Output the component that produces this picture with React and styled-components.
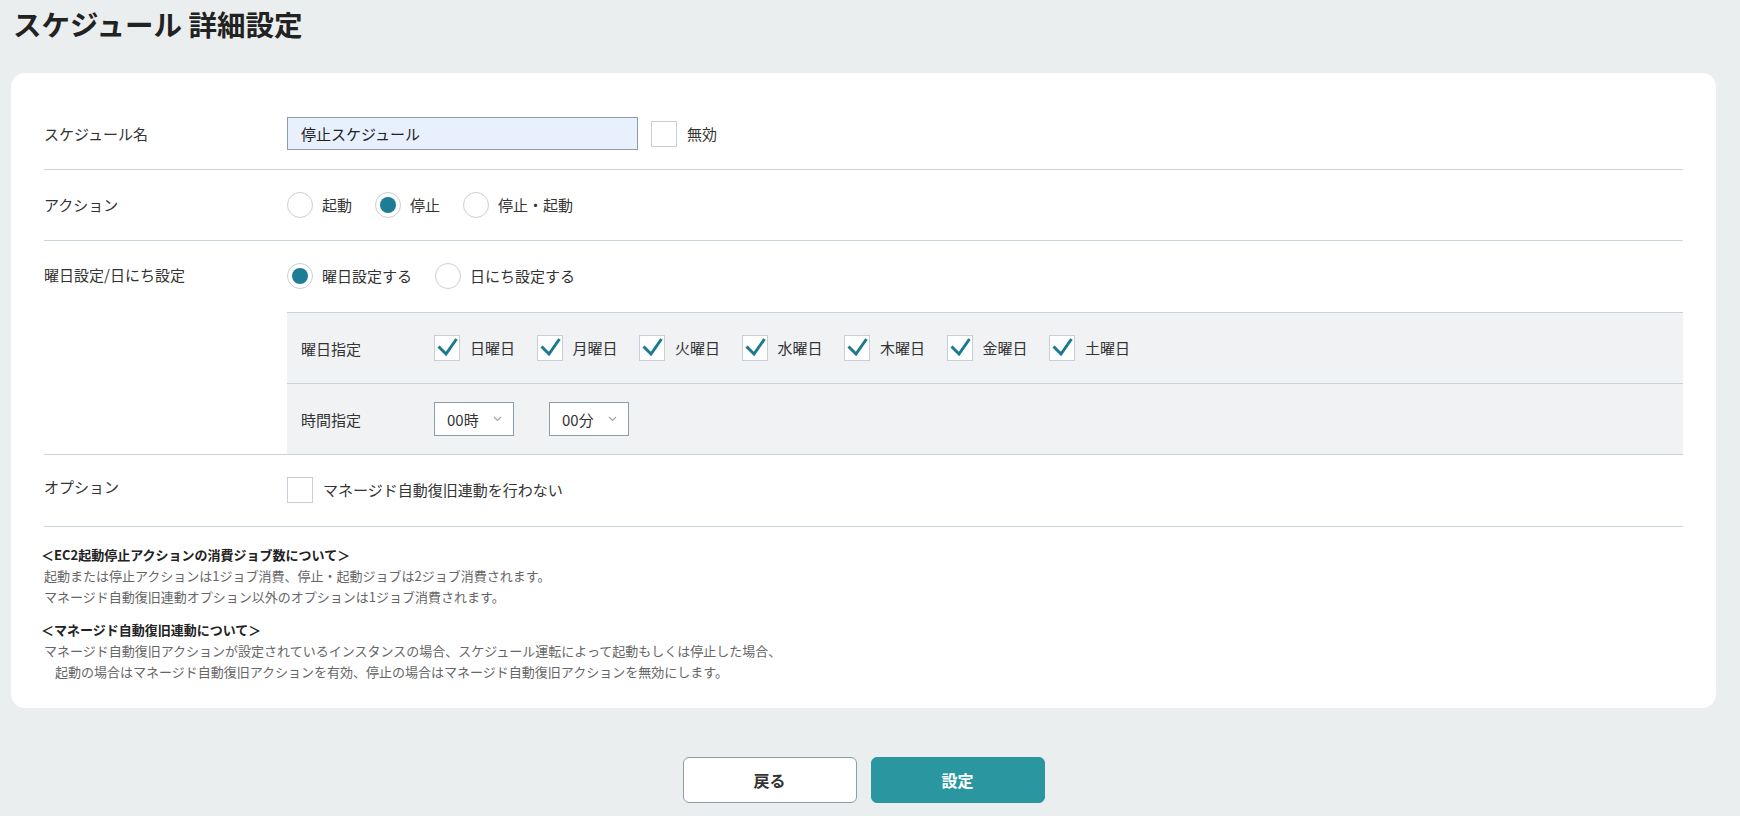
import styled, { createGlobalStyle } from 'styled-components';

const GlobalStyle = createGlobalStyle`
  html, body {
    margin: 0;
    padding: 0;
    background: #eaeeef;
  }
  body {
    font-family: "Noto Sans CJK JP", "Noto Sans", sans-serif;
    color: #333;
  }
`;

const days = ['日曜日', '月曜日', '火曜日', '水曜日', '木曜日', '金曜日', '土曜日'];

const CheckIcon = () => (
  <svg width="24" height="24" viewBox="0 0 24 24">
    <path d="M3.5 10.5 L11 18 L21.5 3" fill="none" stroke="#1b7a90" strokeWidth="3" strokeLinecap="butt" strokeLinejoin="miter" />
  </svg>
);

const Chevron = () => (
  <svg width="9" height="6" viewBox="0 0 9 6">
    <path d="M1 1 L4.5 4.5 L8 1" fill="none" stroke="#9aa5ae" strokeWidth="1.2" />
  </svg>
);

const Radio = ({ checked, label }) => (
  <Option>
    <RadioCircle>{checked && <RadioDot />}</RadioCircle>
    <OptionText>{label}</OptionText>
  </Option>
);

const Check = ({ checked, label, $gap }) => (
  <Option $gap={$gap}>
    <CheckBox>{checked && <CheckIcon />}</CheckBox>
    <OptionText>{label}</OptionText>
  </Option>
);

const App = () => {
  return (
    <Page>
      <GlobalStyle />
      <Title>スケジュール 詳細設定</Title>

      <Card>
        <Row $pad="19px 0" $align="center">
          <Label>スケジュール名</Label>
          <Content>
            <TextInput>停止スケジュール</TextInput>
            <Check label="無効" $gap="10px" />
          </Content>
        </Row>

        <Row $pad="22px 0" $align="center">
          <Label>アクション</Label>
          <Content $gap="23px">
            <Radio label="起動" />
            <Radio checked label="停止" />
            <Radio label="停止・起動" />
          </Content>
        </Row>

        <Row $pad="22px 0 0" $align="flex-start">
          <Label $top="2px">曜日設定/日にち設定</Label>
          <Column>
            <Content $gap="23px">
              <Radio checked label="曜日設定する" />
              <Radio label="日にち設定する" />
            </Content>
            <SubPanel>
              <SubRow>
                <SubLabel>曜日指定</SubLabel>
                <Content $gap="21.5px">
                  {days.map((d) => (
                    <Check key={d} checked label={d} $gap="10px" />
                  ))}
                </Content>
              </SubRow>
              <SubRow>
                <SubLabel>時間指定</SubLabel>
                <Content $gap="35px">
                  <Select>
                    <span>00時</span>
                    <Chevron />
                  </Select>
                  <Select>
                    <span>00分</span>
                    <Chevron />
                  </Select>
                </Content>
              </SubRow>
            </SubPanel>
          </Column>
        </Row>

        <Row $pad="22px 0 23px" $align="flex-start">
          <Label $top="0px">オプション</Label>
          <Check label="マネージド自動復旧連動を行わない" $gap="10px" />
        </Row>

        <Notes>
          <NoteBlock>
            <NoteHead>＜EC2起動停止アクションの消費ジョブ数について＞</NoteHead>
            <NoteLine>起動または停止アクションは1ジョブ消費、停止・起動ジョブは2ジョブ消費されます。</NoteLine>
            <NoteLine>マネージド自動復旧連動オプション以外のオプションは1ジョブ消費されます。</NoteLine>
          </NoteBlock>
          <NoteBlock>
            <NoteHead>＜マネージド自動復旧連動について＞</NoteHead>
            <NoteLine>マネージド自動復旧アクションが設定されているインスタンスの場合、スケジュール運転によって起動もしくは停止した場合、</NoteLine>
            <NoteLine $indent>起動の場合はマネージド自動復旧アクションを有効、停止の場合はマネージド自動復旧アクションを無効にします。</NoteLine>
          </NoteBlock>
        </Notes>
      </Card>

      <Buttons>
        <Button>戻る</Button>
        <Button $primary>設定</Button>
      </Buttons>
    </Page>
  );
};

const Page = styled.div`
  padding: 0 24px 40px 11px;
`;

const Title = styled.h1`
  margin: 0;
  padding: 9px 0 0 2px;
  font-size: 28.5px;
  line-height: 30px;
  font-weight: 700;
  color: #222;
`;

const Card = styled.div`
  margin-top: 34px;
  background: #fff;
  border-radius: 14px;
  padding: 25px 33px 26px;
`;

const Row = styled.div`
  display: flex;
  align-items: ${({ $align }) => $align};
  padding: ${({ $pad }) => $pad};
  border-bottom: 1px solid #c9d3dc;
`;

const Label = styled.div`
  width: 243px;
  flex-shrink: 0;
  font-size: 15px;
  line-height: 20px;
  padding-top: ${({ $top }) => $top || '0'};
  color: #333;
`;

const Column = styled.div`
  flex: 1;
  display: flex;
  flex-direction: column;
  gap: 23px;
`;

const Content = styled.div`
  display: flex;
  align-items: center;
  gap: ${({ $gap }) => $gap || '13px'};
`;

const TextInput = styled.div`
  box-sizing: border-box;
  width: 351px;
  height: 33px;
  padding: 0 13px;
  display: flex;
  align-items: center;
  background: #e8f0fe;
  border: 1px solid #8d9cab;
  font-size: 15px;
  color: #222;
`;

const Option = styled.label`
  display: flex;
  align-items: center;
  gap: ${({ $gap }) => $gap || '9px'};
`;

const OptionText = styled.span`
  font-size: 15px;
  line-height: 20px;
  color: #333;
`;

const RadioCircle = styled.span`
  box-sizing: border-box;
  width: 26px;
  height: 26px;
  border-radius: 50%;
  border: 1px solid #c6cfd8;
  background: #fff;
  display: flex;
  align-items: center;
  justify-content: center;
`;

const RadioDot = styled.span`
  width: 16px;
  height: 16px;
  border-radius: 50%;
  background: #1d7d94;
`;

const CheckBox = styled.span`
  box-sizing: border-box;
  width: 26px;
  height: 26px;
  border: 1px solid #c6cfd8;
  background: #fff;
  display: flex;
  align-items: center;
  justify-content: center;
`;

const SubPanel = styled.div`
  background: #f0f2f3;
  border-top: 1px solid #c9d3dc;
`;

const SubRow = styled.div`
  display: flex;
  align-items: center;
  height: 70px;
  padding-left: 14px;

  & + & {
    border-top: 1px solid #c9d3dc;
  }
`;

const SubLabel = styled.div`
  width: 133px;
  flex-shrink: 0;
  font-size: 15px;
  color: #333;
`;

const Select = styled.div`
  box-sizing: border-box;
  width: 80px;
  height: 34px;
  padding: 0 11px 0 12px;
  display: flex;
  align-items: center;
  justify-content: space-between;
  background: #fff;
  border: 1px solid #8d9cab;
  font-size: 15px;
  color: #333;
`;

const Notes = styled.div`
  padding-top: 17px;
  display: flex;
  flex-direction: column;
  gap: 12px;
`;

const NoteBlock = styled.div`
  display: flex;
  flex-direction: column;
`;

const NoteHead = styled.div`
  font-size: 13px;
  line-height: 21px;
  font-weight: 700;
  color: #222;
  margin-left: -3px;
`;

const NoteLine = styled.div`
  font-size: 13px;
  line-height: 21px;
  color: #666;
  padding-left: ${({ $indent }) => ($indent ? '11px' : '0')};
`;

const Buttons = styled.div`
  margin-top: 49px;
  display: flex;
  justify-content: center;
  gap: 14px;
`;

const Button = styled.button`
  box-sizing: border-box;
  width: 174px;
  height: 46px;
  border-radius: 6px;
  font-family: "Noto Sans CJK JP", sans-serif;
  font-size: 16px;
  font-weight: 700;
  cursor: pointer;
  border: 1px solid ${({ $primary }) => ($primary ? '#2a97a0' : '#8d9cab')};
  background: ${({ $primary }) => ($primary ? '#2a97a0' : '#fff')};
  color: ${({ $primary }) => ($primary ? '#fff' : '#333')};
`;

export default App;
